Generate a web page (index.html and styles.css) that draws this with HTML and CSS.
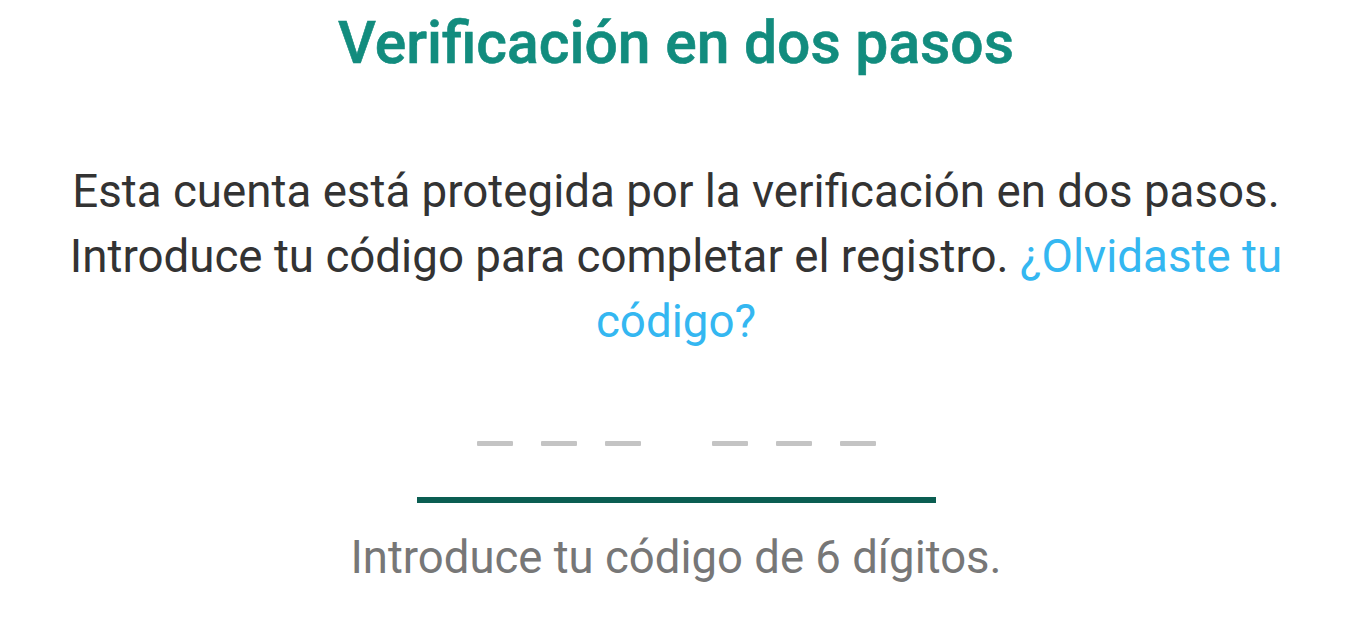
FILE: index.html
```html
<!DOCTYPE html>
<html lang="es">
<head>
<meta charset="utf-8">
<title>Verificación en dos pasos</title>
<link rel="stylesheet" href="styles.css">
</head>
<body>
<main class="screen">
  <h1 class="title">Verificación en dos pasos</h1>
  <p class="desc">Esta cuenta está protegida por la verificación en dos pasos. Introduce tu código para completar el registro. <a class="link" href="#">¿Olvidaste tu código?</a></p>
  <div class="field">
    <div class="dashes">
      <div class="group"><span class="dash"></span><span class="dash"></span><span class="dash"></span></div>
      <div class="group"><span class="dash"></span><span class="dash"></span><span class="dash"></span></div>
    </div>
    <div class="underline"></div>
  </div>
  <p class="hint">Introduce tu código de 6 dígitos.</p>
</main>
</body>
</html>
```
FILE: styles.css
```css
html, body {
  margin: 0;
  padding: 0;
  background: #ffffff;
}
body {
  font-family: Roboto, "Noto Sans", Arial, sans-serif;
  width: 1352px;
  height: 620px;
  overflow: hidden;
}
.screen {
  display: flex;
  flex-direction: column;
  align-items: center;
}
.title {
  margin: 8px 0 0;
  font-size: 58.8px;
  font-weight: 500;
  color: #128c7e;
  line-height: 70px;
  letter-spacing: 0;
  -webkit-text-stroke: 0.6px #128c7e;
}
.desc {
  margin: 81px 0 0;
  width: 1250px;
  text-align: center;
  font-size: 45.7px;
  line-height: 65px;
  color: #333333;
}
.link {
  color: #34b7f1;
  text-decoration: none;
}
.field {
  margin-top: 87px;
  width: 519px;
  display: flex;
  flex-direction: column;
  align-items: center;
}
.dashes {
  display: flex;
  gap: 71px;
}
.group {
  display: flex;
  gap: 28px;
}
.dash {
  width: 36px;
  height: 5px;
  background: #c4c4c4;
  border-radius: 1px;
}
.underline {
  margin-top: 51px;
  width: 519px;
  height: 6px;
  background: #0b5e52;
}
.hint {
  margin: 27px 0 0;
  font-size: 45.5px;
  line-height: 56px;
  color: #777777;
}
```
